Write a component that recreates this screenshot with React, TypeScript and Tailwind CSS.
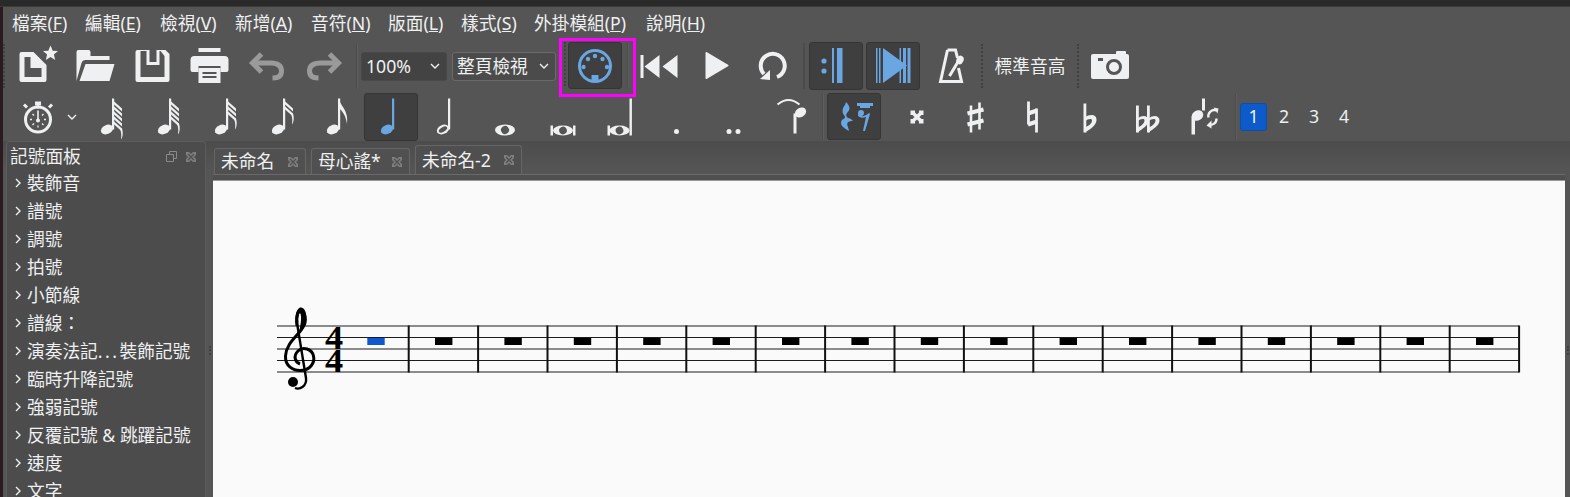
import type { ReactNode } from 'react';

const ICON = '#eff0f1';
const BLUE = '#6aa6e2';
const GREY = '#9a9a9a';

const menus = [
  ['檔案', 'F', 'w-[73px]'],
  ['編輯', 'E', 'w-[75px]'],
  ['檢視', 'V', 'w-[75px]'],
  ['新增', 'A', 'w-[76px]'],
  ['音符', 'N', 'w-[77px]'],
  ['版面', 'L', 'w-[73px]'],
  ['樣式', 'S', 'w-[73px]'],
  ['外掛模組', 'P', 'w-[112px]'],
  ['說明', 'H', 'w-[70px]'],
];

const paletteRows = [
  '裝飾音',
  '譜號',
  '調號',
  '拍號',
  '小節線',
  '譜線：',
  '演奏法記...裝飾記號',
  '臨時升降記號',
  '強弱記號',
  '反覆記號 & 跳躍記號',
  '速度',
  '文字',
];

const barlines = Array.from({ length: 17 }, (_, i) => 408.7 + i * 69.4);
const rests = Array.from({ length: 16 }, (_, i) => 435 + i * 69.4);

// svg in page coordinates, centred on its slot
const Ico = ({ cx, cy, children }: { cx: number; cy: number; children: ReactNode }) => (
  <svg width="48" height="48" viewBox={`${cx - 24} ${cy - 24} 48 48`} className="shrink-0 overflow-visible">
    {children}
  </svg>
);

const Slot = ({ w, children }: { w: string; children?: ReactNode }) => (
  <div className={`${w} h-full flex items-center justify-center shrink-0`}>{children}</div>
);

const Sep = ({ w }: { w: string }) => (
  <div className={`${w} h-[46px] flex justify-center shrink-0`}>
    <div className="w-[2px] h-full bg-[#4c4c4c] border-r border-[#5e5e5e]" />
  </div>
);

const Dots = () => <div className="w-0 h-[44px] border-l-2 border-dotted border-[#404040] shrink-0" />;

const Pressed = ({ w, h, children }: { w: string; h: string; children: ReactNode }) => (
  <div className={`${w} ${h} flex items-center justify-center shrink-0 rounded-[3px] bg-[#3f3f3f] border border-[#353535]`}>
    {children}
  </div>
);

const Chevron = ({ stroke = ICON, down = false }: { stroke?: string; down?: boolean }) => (
  <svg width="10" height="10" viewBox="0 0 10 10" className="shrink-0">
    <path d={down ? 'M1,3 L5,7 L9,3' : 'M3,1 L7,5 L3,9'} fill="none" stroke={stroke} strokeWidth="1.4" />
  </svg>
);

const CloseX = () => (
  <svg width="12" height="12" viewBox="0 0 12 12" className="shrink-0">
    <path d="M1,1 H4 L6,3 L8,1 H11 V4 L9,6 L11,8 V11 H8 L6,9 L4,11 H1 V8 L3,6 L1,4 Z" fill="#7e7e7e" />
    <path d="M3,3 L9,9 M9,3 L3,9" stroke="#4f4f4f" strokeWidth="1.2" />
  </svg>
);

const FloatBtn = () => (
  <svg width="11" height="11" viewBox="0 0 11 11" className="shrink-0">
    <path d="M3.5,3 V0.5 H10.5 V7.5 H8" fill="none" stroke="#8a8a8a" />
    <path d="M0.5,3.5 H7.5 V10.5 H0.5 Z" fill="none" stroke="#8a8a8a" />
  </svg>
);

const Combo = ({ w, label, dark }: { w: string; label: string; dark?: boolean }) => (
  <div
    className={`${w} h-[29px] shrink-0 flex items-center justify-between pl-[4px] pr-[6px] rounded-[3px] border text-[17.7px] text-[#eff0f1] ${
      dark ? 'bg-[#434343] border-[#494949]' : 'bg-[#4b4b4b] border-[#6a6a6a]'
    }`}
  >
    <span>{label}</span>
    <Chevron down />
  </div>
);

// note with n flags, stem top at y=5.5 in a 48 box
const Note = ({ flags = 0, color = ICON, hollow = false }: { flags?: number; color?: string; hollow?: boolean }) => {
  const last = 7.5 + (flags - 1) * 5;
  return (
    <svg width="48" height="48" viewBox="0 0 48 48" className="shrink-0">
      <g fill={color}>
        <rect x="25" y="5.5" width="2.2" height="31" />
        <ellipse cx="20" cy="36.5" rx="6.4" ry="4.5" transform="rotate(-25 20 36.5)" />
        {hollow && <ellipse cx="20" cy="36.5" rx="4.6" ry="2.2" transform="rotate(-30 20 36.5)" fill="#555" />}
        {flags === 1 && <path d="M26,5.5 C27,13 36,17 34,31 C33,23 30,19 26,15 Z" />}
        {flags > 1 &&
          Array.from({ length: flags }, (_, i) => {
            const y = 7.5 + i * 5;
            return <path key={i} d={`M26,${y} L35,${y + 8} L35,${y + 11} L26,${y + 3} Z`} />;
          })}
        {flags > 1 && (
          <path d={`M33,${last + 8} L35,${last + 8} C36.5,${last + 13} 35.5,${last + 17} 34,${last + 19} C34.5,${last + 15} 34.5,${last + 13} 33,${last + 8} Z`} />
        )}
      </g>
    </svg>
  );
};

const Row1 = () => (
  <div className="h-[52px] flex items-center">
    <Dots />
    <div className="w-[5px]" />
    <Slot w="w-[57px]">
      <Ico cx={38.5} cy={66}>
        <path
          fillRule="evenodd"
          fill={ICON}
          d="M21,52 H33 L46,65 V80 Q46,82 44,82 H21 Q19,82 19,80 V54 Q19,52 21,52 Z M24,57 V77 H41 V68 H30 V57 Z"
        />
        <polygon fill={ICON} points="50,45.5 52.2,50.7 57.5,51 53.4,54.6 54.7,60 50,57 45.3,60 46.6,54.6 42.5,51 47.8,50.7" />
      </Ico>
    </Slot>
    <Slot w="w-[57px]">
      <Ico cx={95.5} cy={66}>
        <path fill={ICON} d="M76,81 V52 Q76,50 78,50 H88 Q90,50 90,52 V56 H109 V60 H85 Q82,60 81,63 Z" />
        <path fill={ICON} d="M85,64 H114 L109,81 H79 Z" />
      </Ico>
    </Slot>
    <Slot w="w-[57px]">
      <Ico cx={152.5} cy={66}>
        <path
          fillRule="evenodd"
          fill={ICON}
          d="M137,50 H165 L169,54 V80 Q169,82 167,82 H137 Q135,82 135,80 V52 Q135,50 137,50 Z M140,51 V77 H164 V56 L160,51 H159 V65 H146 V51 Z"
        />
        <rect x="149" y="50" width="7" height="12" fill="#555" />
      </Ico>
    </Slot>
    <Slot w="w-[57px]">
      <Ico cx={209.5} cy={66}>
        <rect x="198" y="48" width="22" height="4" fill={ICON} />
        <path fill={ICON} d="M194,56 H224 Q228,56 228,60 V70 Q228,72 226,72 H220 V66 H198 V72 H192 Q190,72 190,70 V60 Q190,56 194,56 Z" />
        <path fillRule="evenodd" fill={ICON} d="M198,68 H220 V83 H198 Z M202,72 V74 H216 V72 Z M202,76 V78 H216 V76 Z" />
      </Ico>
    </Slot>
    <Slot w="w-[57px]">
      <Ico cx={266.5} cy={66}>
        <path d="M261,54 L252,63 L261,72" fill="none" stroke={GREY} strokeWidth="5" />
        <path d="M253,63 H270 Q281,63 281,71 Q281,78 272,78" fill="none" stroke={GREY} strokeWidth="5" />
      </Ico>
    </Slot>
    <Slot w="w-[57px]">
      <Ico cx={323.5} cy={66}>
        <path d="M329,54 L338,63 L329,72" fill="none" stroke={GREY} strokeWidth="5" />
        <path d="M337,63 H320 Q309,63 309,71 Q309,78 318,78" fill="none" stroke={GREY} strokeWidth="5" />
      </Ico>
    </Slot>
    <Sep w="w-[9px]" />
    <div className="w-[87px] shrink-0">
      <Combo w="w-[86px]" label="100%" dark />
    </div>
    <div className="ml-[4px]">
      <Combo w="w-[104px]" label="整頁檢視" />
    </div>
    <div className="ml-[3px] mt-[3px] w-[77px] h-[59px] shrink-0 border-[3px] border-[#ff00ff] flex items-start pt-[1px] pl-[2px] gap-[2px]">
      <Dots />
      <Pressed w="w-[54px]" h="h-[47px]">
        <svg width="36" height="36" viewBox="576 47 36 36">
          <circle cx="594" cy="65" r="15.5" fill="none" stroke={BLUE} strokeWidth="3" />
          <g fill={BLUE}>
            <circle cx="582.5" cy="66" r="2.2" />
            <circle cx="587" cy="58" r="2.2" />
            <circle cx="594" cy="55" r="2.2" />
            <circle cx="601.5" cy="58" r="2.2" />
            <circle cx="606" cy="66" r="2.2" />
            <rect x="590.5" y="74" width="7" height="6" />
          </g>
        </svg>
      </Pressed>
      <Sep w="w-[8px]" />
    </div>
    <Slot w="w-[43px]">
      <Ico cx={657.5} cy={66}>
        <rect x="640" y="55" width="3" height="23" fill={ICON} />
        <polygon fill={ICON} points="644,66.5 659,55 659,78" />
        <polygon fill={ICON} points="662,66.5 677,55 677,78" />
      </Ico>
    </Slot>
    <div className="w-[9px]" />
    <Slot w="w-[57px]">
      <Ico cx={716.5} cy={66}>
        <path fill={ICON} stroke={ICON} strokeWidth="2" strokeLinejoin="round" d="M706,53 L727,65.5 L706,78 Z" />
      </Ico>
    </Slot>
    <Slot w="w-[54px]">
      <Ico cx={772} cy={66}>
        <path d="M777,77 A12,12 0 1 0 764,74" fill="none" stroke={ICON} strokeWidth="4" />
        <polygon fill={ICON} points="770,70 770,80 760,79" />
      </Ico>
    </Slot>
    <div className="w-[10px] flex justify-center shrink-0">
      <div className="w-[2px] h-[46px] bg-[#4c4c4c]" />
    </div>
    <Pressed w="w-[54px]" h="h-[48px]">
      <svg width="30" height="40" viewBox="820 46 30 40">
        <g fill={BLUE}>
          <circle cx="823" cy="61" r="2.6" />
          <circle cx="823" cy="71" r="2.6" />
          <rect x="831" y="48" width="2" height="35" />
          <rect x="836" y="48" width="5.5" height="35" />
        </g>
      </svg>
    </Pressed>
    <div className="w-[3px]" />
    <Pressed w="w-[54px]" h="h-[48px]">
      <svg width="40" height="40" viewBox="873 46 40 40">
        <g fill={BLUE}>
          <rect x="876" y="48" width="1.5" height="35" />
          <rect x="879" y="48" width="1.5" height="35" />
          <polygon points="883,48 907,65.5 883,83" />
          <rect x="899.5" y="48" width="1.5" height="35" />
          <rect x="903" y="48" width="3" height="35" />
          <rect x="907.5" y="48" width="3" height="35" />
        </g>
      </svg>
    </Pressed>
    <Slot w="w-[57px]">
      <Ico cx={948.5} cy={66}>
        <path d="M947,50 H955 L957,58 M947,50 L940,81.5 H961 L958,68" fill="none" stroke={ICON} strokeWidth="3" />
        <path d="M949,76 L958,61" stroke={ICON} strokeWidth="3" />
        <ellipse cx="959.5" cy="60" rx="3.5" ry="4.5" transform="rotate(25 959.5 60)" fill={ICON} />
      </Ico>
    </Slot>
    <div className="w-[4px]" />
    <Dots />
    <div className="w-[94px] shrink-0 text-center text-[17.7px] text-[#eff0f1] whitespace-nowrap">標準音高</div>
    <Dots />
    <Slot w="w-[60px]">
      <Ico cx={1109} cy={66}>
        <path fill={ICON} d="M1093,54 H1116 V52 Q1116,51 1117,51 H1125 Q1126,51 1126,52 V54 H1127 Q1129,54 1129,56 V77 Q1129,79 1127,79 H1093 Q1091,79 1091,77 V56 Q1091,54 1093,54 Z" />
        <circle cx="1114" cy="67" r="6.5" fill="none" stroke="#555" strokeWidth="3" />
        <rect x="1098" y="58" width="5" height="3" fill="#555" />
      </Ico>
    </Slot>
  </div>
);

const Row2 = () => (
  <div className="h-[49px] flex items-center pl-[7px]">
    <Slot w="w-[56px]">
      <Ico cx={38} cy={116.5}>
        <circle cx="38" cy="119" r="12.5" fill="none" stroke={ICON} strokeWidth="3" />
        <rect x="35" y="101" width="6" height="4" fill={ICON} />
        <rect x="37" y="104" width="2" height="4" fill={ICON} />
        <path d="M27,107 L24,104 M49,107 L52,104" stroke={ICON} strokeWidth="3" />
        <path d="M38,110 V120" stroke={ICON} strokeWidth="1.6" />
        <circle cx="38" cy="120" r="2" fill={ICON} />
        <path d="M30,119 H32 M44,119 H46 M38,127 V125 M32.5,113.5 L34,115 M43.5,113.5 L42,115 M32.5,124.5 L34,123 M43.5,124.5 L42,123" stroke={ICON} strokeWidth="1.3" />
      </Ico>
    </Slot>
    <div className="w-[16px] flex items-center pl-[1px] shrink-0">
      <Chevron down />
    </div>
    <Slot w="w-[57px]"><Note flags={5} /></Slot>
    <Slot w="w-[57px]"><Note flags={4} /></Slot>
    <Slot w="w-[57px]"><Note flags={3} /></Slot>
    <Slot w="w-[57px]"><Note flags={2} /></Slot>
    <Slot w="w-[54px]"><Note flags={1} /></Slot>
    <Pressed w="w-[54px]" h="h-[48px]">
      <Note color={BLUE} />
    </Pressed>
    <Slot w="w-[58px]"><Note hollow /></Slot>
    <Slot w="w-[58px]">
      <Ico cx={505} cy={116.5}>
        <ellipse cx="505" cy="129.5" rx="10" ry="5.5" fill={ICON} />
        <ellipse cx="505" cy="129.5" rx="4" ry="4" transform="rotate(-30 505 129.5)" fill="#555" />
      </Ico>
    </Slot>
    <Slot w="w-[57px]">
      <Ico cx={562.5} cy={116.5}>
        <rect x="550" y="125" width="2.5" height="10" fill={ICON} />
        <rect x="572.5" y="125" width="2.5" height="10" fill={ICON} />
        <ellipse cx="562.5" cy="130" rx="10" ry="5" fill={ICON} />
        <ellipse cx="562.5" cy="130" rx="3.8" ry="3.8" transform="rotate(-30 562.5 130)" fill="#555" />
      </Ico>
    </Slot>
    <Slot w="w-[57px]">
      <Ico cx={619.5} cy={116.5}>
        <rect x="607" y="125" width="2.5" height="10" fill={ICON} />
        <rect x="629" y="98" width="2.4" height="37" fill={ICON} />
        <ellipse cx="619" cy="130" rx="10" ry="5" fill={ICON} />
        <ellipse cx="619" cy="130" rx="3.8" ry="3.8" transform="rotate(-30 619 130)" fill="#555" />
      </Ico>
    </Slot>
    <Slot w="w-[57px]">
      <Ico cx={676.5} cy={116.5}>
        <circle cx="676" cy="131" r="2.5" fill={ICON} />
      </Ico>
    </Slot>
    <Slot w="w-[57px]">
      <Ico cx={733.5} cy={116.5}>
        <circle cx="728.5" cy="131" r="2.5" fill={ICON} />
        <circle cx="737.5" cy="131" r="2.5" fill={ICON} />
      </Ico>
    </Slot>
    <Slot w="w-[57px]">
      <Ico cx={790.5} cy={116.5}>
        <path d="M777,104 Q788,95 799,104" fill="none" stroke={ICON} strokeWidth="2" />
        <rect x="793" y="113" width="3" height="20" fill={ICON} />
        <ellipse cx="800" cy="112" rx="6" ry="4.5" transform="rotate(-30 800 112)" fill={ICON} />
      </Ico>
    </Slot>
    <Sep w="w-[8px]" />
    <Pressed w="w-[54px]" h="h-[47px]">
      <svg width="40" height="40" viewBox="834 97 40 40">
        <g fill={BLUE}>
          <path d="M846,102 C851,107 850,110 847,113 C845,116 847,118 851,119 L853,121 C848,121 846,123 848,127 L849,131 C843,128 839,124 842,120 C845,118 846,118 844,115 C842,113 842,108 845,105 Z" />
          <rect x="857" y="103" width="16" height="3" />
          <rect x="860" y="106" width="10" height="2" />
          <circle cx="861" cy="113" r="3" />
          <path d="M858,114 Q863,119 869,113 L870,114 L865,131 H863 L866,117 Q861,119 858,116 Z" />
        </g>
      </svg>
    </Pressed>
    <div className="w-[7px]" />
    <Slot w="w-[57px]">
      <Ico cx={916.5} cy={116.5}>
        <path d="M912,112 L921,121 M921,112 L912,121" stroke={ICON} strokeWidth="3.5" />
        <rect x="910" y="110" width="4.5" height="4.5" fill={ICON} />
        <rect x="918.5" y="110" width="4.5" height="4.5" fill={ICON} />
        <rect x="910" y="118.5" width="4.5" height="4.5" fill={ICON} />
        <rect x="918.5" y="118.5" width="4.5" height="4.5" fill={ICON} />
      </Ico>
    </Slot>
    <Slot w="w-[57px]">
      <Ico cx={973.5} cy={116.5}>
        <path d="M970.5,105 V132 M979,102 V129" stroke={ICON} strokeWidth="2.6" />
        <path d="M967,113 L983,109 M967,124 L983,120" stroke={ICON} strokeWidth="4" />
      </Ico>
    </Slot>
    <Slot w="w-[58px]">
      <Ico cx={1031} cy={116.5}>
        <path d="M1028.5,101 V124 M1036.5,108 V132" stroke={ICON} strokeWidth="2.8" />
        <path d="M1028,113 L1037,110 M1028,124 L1037,121" stroke={ICON} strokeWidth="4" />
      </Ico>
    </Slot>
    <Slot w="w-[58px]">
      <Ico cx={1089} cy={116.5}>
        <rect x="1083.5" y="103" width="2.8" height="29" fill={ICON} />
        <path d="M1085,117 C1090,113 1097,114 1096.5,120 C1096,125 1090,129 1085,132 L1085,127 C1089,125 1092,123 1092,120 C1092,118 1088,118 1085,121 Z" fill={ICON} />
      </Ico>
    </Slot>
    <Slot w="w-[57px]">
      <Ico cx={1146.5} cy={116.5}>
        {[1135.5, 1146.5].map(x => (
          <g key={x} transform={`translate(${x - 1083.5} 2)`}>
            <rect x="1083.5" y="103" width="2.8" height="27" fill={ICON} />
            <path d="M1085,116 C1090,112 1096,113 1096,118 C1096,123 1090,126 1085,130 L1085,125 C1088,124 1092,121 1092,118 C1092,116 1088,116 1085,119 Z" fill={ICON} />
          </g>
        ))}
      </Ico>
    </Slot>
    <Slot w="w-[57px]">
      <Ico cx={1203.5} cy={116.5}>
        <rect x="1201.5" y="98" width="3" height="12" fill={ICON} />
        <rect x="1191" y="116" width="3.5" height="18" fill={ICON} />
        <ellipse cx="1197" cy="115" rx="6" ry="5" transform="rotate(-30 1197 115)" fill={ICON} />
        <path d="M1208,117 A6,6 0 0 1 1216,110 M1216,118 A6,6 0 0 1 1208,124" fill="none" stroke={ICON} strokeWidth="2.4" />
        <polygon fill={ICON} points="1213,107 1218,108 1217,113" />
        <polygon fill={ICON} points="1211,120 1211,128 1206,125" />
      </Ico>
    </Slot>
    <Sep w="w-[8px]" />
    <div className="flex gap-[4px] text-[17.7px] text-[#eff0f1]">
      <div className="w-[27px] h-[28px] flex items-center justify-center rounded-[3px] bg-[#0d5bcb] border border-[#0e4ea8]">1</div>
      <div className="w-[26px] h-[28px] flex items-center justify-center">2</div>
      <div className="w-[26px] h-[28px] flex items-center justify-center">3</div>
      <div className="w-[26px] h-[28px] flex items-center justify-center">4</div>
    </div>
  </div>
);

const Palette = () => (
  <div className="w-[200px] ml-[3px] h-full shrink-0 bg-[#4c4c4c] border border-b-0 border-[#5c5c5c] rounded-t-[4px] overflow-hidden">
    <div className="h-[27px] pt-[2px] flex items-center pl-[3px] pr-[8px] text-[17.7px] text-[#eff0f1]">
      <span className="flex-1">記號面板</span>
      <FloatBtn />
      <div className="w-[8px]" />
      <CloseX />
    </div>
    {paletteRows.map(label => (
      <div key={label} className="h-[28px] flex items-center text-[17.7px] text-[#eff0f1] whitespace-nowrap">
        <div className="w-[20px] pl-[6px] shrink-0">
          <Chevron />
        </div>
        {label.includes('...') ? (
          <span>
            {label.split('...')[0]}
            <span className="tracking-[2.5px]">...</span>
            {label.split('...')[1]}
          </span>
        ) : (
          <span>{label}</span>
        )}
      </div>
    ))}
  </div>
);

const Tab = ({ label, w, active }: { label: string; w: string; active?: boolean }) => (
  <div
    className={`${w} ${
      active ? 'h-[29px] bg-[#4f4f4f]' : 'h-[26px] bg-[#505050]'
    } shrink-0 flex items-center justify-between pl-[6px] pr-[6px] rounded-t-[3px] border border-b-0 border-[#666] text-[17.7px] text-[#eff0f1] whitespace-nowrap`}
  >
    <span>{label}</span>
    <CloseX />
  </div>
);

const Score = () => (
  <svg width="1352" height="317" viewBox="213 180 1352 317" className="block shrink-0">
    <g stroke="#1c1c1c" strokeWidth="1">
      {[325, 336.5, 348, 359.5, 371].map(y => (
        <line key={y} x1="277" x2="1519" y1={y} y2={y} />
      ))}
    </g>
    <g stroke="#111" strokeWidth="2">
      {barlines.map(x => (
        <line key={x} x1={x} x2={x} y1="324.5" y2="371.5" />
      ))}
    </g>
    <rect x="367.3" y="337" width="17.4" height="7" fill="#0f57cf" />
    {rests.map(x => (
      <rect key={x} x={x} y="337" width="17.4" height="7" fill="#000" />
    ))}
    {/* treble clef */}
    <g fill="none" stroke="#000">
      <path
        strokeWidth="3"
        d="M297,322 C296,316 298,309 301,308 C305,309 306,318 304,324 C301,333 286,341 285.5,355 C285,365 293,370 301,369.5 C310,369 315,362 313.5,355 C312,348 303,345 298,350 C293,355 295,361 300,363"
      />
      <path strokeWidth="2.4" d="M297,322 L306,377 C307,385 300,389 295,387" />
    </g>
    <path fill="#000" d="M300,306.5 C306,309 308,317 306,324 L299,332 C301,322 302,315 300,312 C298,314 298,318 298.5,325 L295.5,325 C294.5,316 296,309 300,306.5 Z" />
    <circle cx="293" cy="381" r="5" fill="#000" />
    <g fontFamily="'Liberation Serif', serif" fontWeight="700" fontSize="33" fill="#000">
      <text transform="translate(325 348) scale(1.1 1)">4</text>
      <text transform="translate(325 371) scale(1.1 1)">4</text>
    </g>
  </svg>
);

const App = () => (
  <div className="w-[1570px] h-[497px] overflow-hidden flex flex-col bg-[#555] font-['Noto_Sans','Noto_Sans_CJK_TC',sans-serif]">
    <div className="h-[7px] shrink-0 bg-[#2a2a2a] border-b border-[#3a3a3a]" />
    <div className="flex-1 min-h-0 flex">
      <div className="w-[3px] shrink-0 bg-[#2b1a20]" />
      <div className="flex-1 min-w-0 flex flex-col">
        <div className="h-[33px] shrink-0 flex items-center pl-[9px] text-[17.7px] text-[#eff0f1]">
          {menus.map(([name, key, w]) => (
            <div key={key} className={`${w} shrink-0 whitespace-nowrap`}>
              {name}(<u>{key}</u>)
            </div>
          ))}
        </div>
        <Row1 />
        <Row2 />
        <div className="flex-1 min-h-0 flex bg-gradient-to-b from-[#4c4c4c] to-[#555] to-[30px]">
          <Palette />
          <div className="w-[7px] shrink-0 flex flex-col items-center pt-[205px]">
            <div className="w-0 h-[9px] border-l-2 border-dotted border-[#404040]" />
          </div>
          <div className="w-[1352px] shrink-0 flex flex-col">
            <div className="h-[33px] shrink-0 flex items-end pl-[1px] gap-[5px]">
              <Tab label="未命名" w="w-[92px]" />
              <Tab label="母心謠*" w="w-[99px]" />
              <Tab label="未命名-2" w="w-[107px]" active />
            </div>
            <div className="h-[6px] shrink-0 bg-[#4f4f4f] border-t border-[#6a6a6a]" />
            <div className="h-[317px] bg-[#fafafa] border-t border-[#9a9a9a] shrink-0">
              <Score />
            </div>
          </div>
          <div className="flex-1 flex flex-col items-center pt-[205px]">
            <div className="w-0 h-[9px] border-l-2 border-dotted border-[#404040]" />
          </div>
        </div>
      </div>
    </div>
  </div>
);

export default App;
